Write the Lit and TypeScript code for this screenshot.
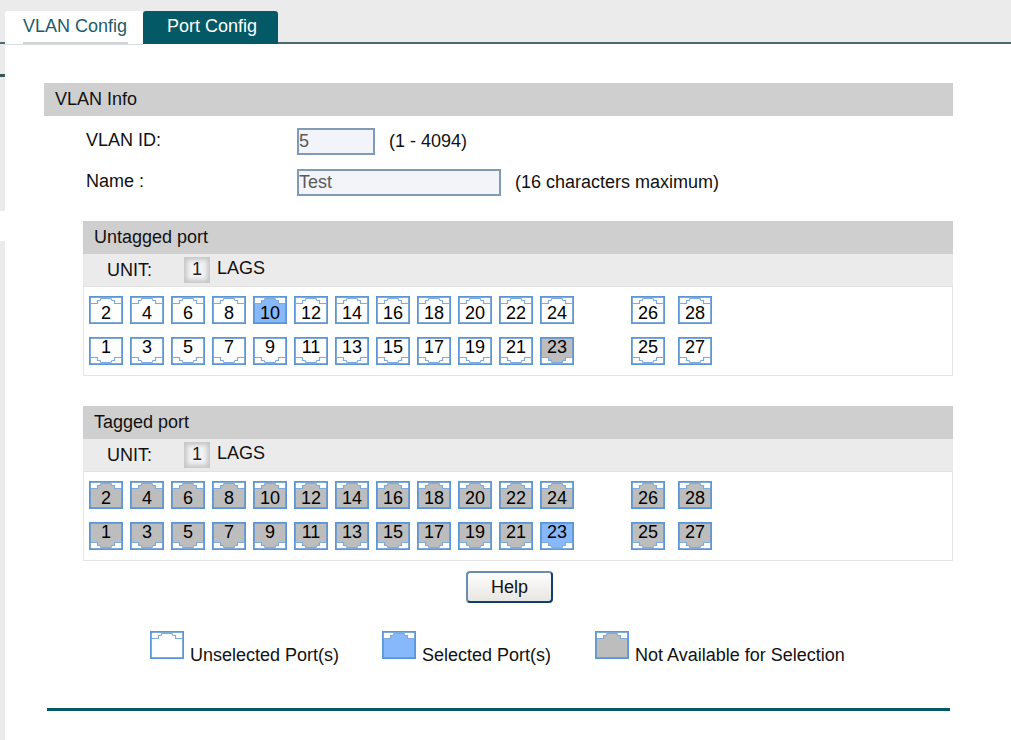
import { LitElement, html, css, svg } from "lit";
import { customElement } from "lit/decorators.js";

type Kind = "free" | "sel" | "na";
const fills: Record<Kind, string> = { free: "#ffffff", sel: "#86b8fb", na: "#bdbdbd" };

function port(kind: Kind, down: boolean) {
  return svg`<svg width="34" height="28" viewBox="0 0 34 28" style="display:block">
    <g transform="${down ? "matrix(1 0 0 -1 0 28)" : ""}">
      <rect x="1" y="1" width="32" height="26" fill="${fills[kind]}"/>
      <path d="M1 1H33V7.5H25.5V4.5H23L22 2.5H12L11 4.5H8.5V7.5H1Z" fill="#fff"/>
      <path d="M2 7.5H8.5V4.5H11L12 2.5H22L23 4.5H25.5V7.5H32" fill="none" stroke="#7fabdc" stroke-width="1.2"/>
      <rect x="0.9" y="0.9" width="32.2" height="26.2" fill="none" stroke="#5c96d4" stroke-width="1.8"/>
    </g>
  </svg>`;
}

@customElement("port-cell")
class PortCell extends LitElement {
  static properties = { num: {}, kind: {}, down: { type: Boolean } };
  num = "";
  kind: Kind = "free";
  down = false;
  static styles = css`
    :host { display: block; width: 34px; height: 28px; position: relative; }
    .n {
      position: absolute; left: 0; right: 0; text-align: center;
      font: 18px/20px "Liberation Sans", sans-serif; color: #000;
      top: 7px;
    }
    .n.down { top: 0; }
  `;
  render() {
    return html`${port(this.kind, this.down)}<span class="n ${this.down ? "down" : ""}">${this.num}</span>`;
  }
}

@customElement("port-panel")
class PortPanel extends LitElement {
  static properties = { title: {}, mode: {} };
  title = "";
  mode = "untagged";
  static styles = css`
    :host { display: block; }
    .head {
      height: 33px; background: #cfcfcf; padding-left: 11px;
      font: 18px/32px "Liberation Sans", sans-serif; color: #111;
    }
    .unit {
      height: 33px; background: #ebebeb; display: flex; align-items: flex-start;
      font: 18px "Liberation Sans", sans-serif; color: #111; box-sizing: border-box;
      border-bottom: 1px solid #e2e2e2;
    }
    .unit .lab { margin-left: 24px; width: 77px; line-height: 31px; padding-top: 1px; }
    .chip {
      width: 26px; height: 26px; margin-top: 3px; box-sizing: border-box; background: #f2f2f2;
      box-shadow: inset 0 0 4px 3px #c6c6c6; text-align: center; line-height: 24px; color: #222;
    }
    .lags { margin-left: 7px; line-height: 29px; }
    .body {
      height: 89px; box-sizing: border-box; border: 1px solid #e4e4e4; border-top: 0;
      padding: 9px 0 0 5px; background: #fff;
      display: flex; flex-direction: column; gap: 13px;
    }
    .pr { display: flex; }
    .g { display: flex; gap: 7px; }
    .g2 { display: flex; gap: 13px; margin-left: 57px; }
  `;
  render() {
    const k = (n: number): Kind => {
      if (this.mode === "untagged") {
        if (n === 10) return "sel";
        if (n === 23) return "na";
        return "free";
      }
      return n === 23 ? "sel" : "na";
    };
    const cell = (n: number, down: boolean) =>
      html`<port-cell .num=${String(n)} .kind=${k(n)} .down=${down}></port-cell>`;
    const row = (a: number[], b: number[], down: boolean) => html`<div class="pr">
      <div class="g">${a.map((n) => cell(n, down))}</div>
      <div class="g2">${b.map((n) => cell(n, down))}</div>
    </div>`;
    return html`
      <div class="head">${this.title}</div>
      <div class="unit"><span class="lab">UNIT:</span><span class="chip">1</span><span class="lags">LAGS</span></div>
      <div class="body">
        ${row([2, 4, 6, 8, 10, 12, 14, 16, 18, 20, 22, 24], [26, 28], false)}
        ${row([1, 3, 5, 7, 9, 11, 13, 15, 17, 19, 21, 23], [25, 27], true)}
      </div>`;
  }
}

@customElement("app-root")
class AppRoot extends LitElement {
  static styles = css`
    :host { display: block; height: 740px; background: #fff; font-family: "Liberation Sans", sans-serif; overflow: hidden; }
    .tabbar {
      height: 44px; box-sizing: border-box; background: #ebebeb; border-bottom: 2px solid #4a6a70;
      display: flex; align-items: flex-end; padding-left: 5px;
    }
    .tab {
      font-size: 18px; box-sizing: border-box;
      border-radius: 3px 3px 0 0; position: relative;
    }
    .tab.a {
      width: 138px; height: 34px; margin-bottom: -3px; padding-left: 18px; background: #fff; color: #1d5c66;
      border-bottom: 1px solid #d9dfdf;
    }
    .tab.a span { display: inline-block; width: 105px; line-height: 31px; border-bottom: 2px solid #cfd6d6; }
    .tab.b { width: 135px; height: 33px; margin-bottom: -2px; padding-left: 24px; line-height: 31px; background: #035a66; color: #fff; }
    .main { display: flex; height: 696px; }
    .rail { width: 5px; display: flex; flex-direction: column; background: #ebebeb; }
    .r1 { height: 30px; }
    .rl { height: 3px; background: #3d5560; }
    .r2 { height: 134px; }
    .r3 { height: 30px; background: #fff; }
    .content { margin-left: 39px; width: 909px; padding-top: 39px; }
    .sect { height: 33px; background: #cfcfcf; padding-left: 11px; font: 18px/32px "Liberation Sans", sans-serif; color: #111; }
    .row { display: flex; align-items: flex-start; margin-left: 42px; font-size: 18px; color: #111; }
    .row .k { width: 211px; line-height: 24px; }
    .r-id { margin-top: 12px; height: 41px; }
    .r-name { height: 40px; }
    .inp {
      box-sizing: border-box; border: 2px solid #7f9bb8; background: #f2f4fa; height: 27px;
      font-size: 18px; line-height: 23px; color: #5a5a5a;
    }
    .inp.s { width: 78px; }
    .inp.l { width: 204px; }
    .hint { margin-left: 14px; line-height: 27px; }
    .panels { margin-left: 39px; width: 870px; margin-top: 12px; display: flex; flex-direction: column; gap: 30px; }
    .help-row { margin-left: 422px; margin-top: 10px; }
    button {
      display: block; width: 87px; height: 32px; font: 18px "Liberation Sans", sans-serif; color: #111; padding: 0;
      background: linear-gradient(#fdfdfd, #e8e6e2); border: 2px solid;
      border-color: #6a8db0 #123f6e #123f6e #6a8db0; border-radius: 4px;
    }
    .legend { display: flex; margin-left: 106px; margin-top: 28px; font-size: 18px; color: #111; }
    .li { display: flex; align-items: flex-end; height: 28px; }
    .li.u { width: 232px; }
    .li.s { width: 213px; }
    .li span { line-height: 24px; margin-left: 6px; margin-bottom: -8px; }
    .foot { margin-left: 3px; margin-top: 49px; width: 903px; height: 3px; background: #035a66; }
  `;
  private leg(kind: Kind) {
    return port(kind, false);
  }
  render() {
    return html`
      <div class="tabbar">
        <div class="tab a"><span>VLAN Config</span></div>
        <div class="tab b">Port Config</div>
      </div>
      <div class="main">
        <div class="rail"><div class="r1"></div><div class="rl"></div><div class="r2"></div><div class="r3"></div></div>
        <div class="content">
          <div class="sect">VLAN Info</div>
          <div class="row r-id"><span class="k">VLAN ID:</span><div class="inp s">5</div><span class="hint">(1 - 4094)</span></div>
          <div class="row r-name"><span class="k">Name :</span><div class="inp l">Test</div><span class="hint">(16 characters maximum)</span></div>
          <div class="panels">
            <port-panel .title=${"Untagged port"} .mode=${"untagged"}></port-panel>
            <port-panel .title=${"Tagged port"} .mode=${"tagged"}></port-panel>
          </div>
          <div class="help-row"><button>Help</button></div>
          <div class="legend">
            <div class="li u">${this.leg("free")}<span>Unselected Port(s)</span></div>
            <div class="li s">${this.leg("sel")}<span>Selected Port(s)</span></div>
            <div class="li">${this.leg("na")}<span>Not Available for Selection</span></div>
          </div>
          <div class="foot"></div>
        </div>
      </div>`;
  }
}
